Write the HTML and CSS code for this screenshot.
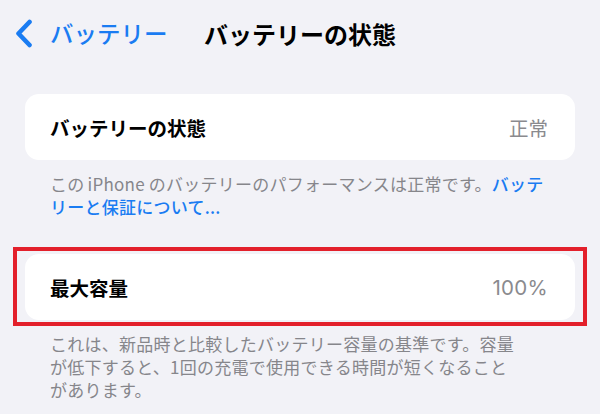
FILE: index.html
```html
<!DOCTYPE html>
<html lang="ja">
<head>
<meta charset="utf-8">
<link rel="stylesheet" href="styles.css">
</head>
<body>
<div class="screen">
  <header class="nav">
    <div class="back">
      <svg class="chev" width="19" height="29" viewBox="0 0 19 29"><path d="M15.5 3 L4.5 14.5 L15.5 26" fill="none" stroke="#1a7cf2" stroke-width="4.6" stroke-linecap="round" stroke-linejoin="round"/></svg>
      <span class="back-text">バッテリー</span>
    </div>
    <h1 class="title">バッテリーの状態</h1>
    <div></div>
  </header>

  <section class="group first">
    <div class="card">
      <span class="label">バッテリーの状態</span>
      <span class="value">正常</span>
    </div>
    <p class="footer">この<span class="latin">iPhone</span>のバッテリーのパフォーマンスは正常です。<span class="link">バッテ<br>リーと保証について...</span></p>
  </section>

  <section class="group second">
    <div class="card-wrap">
      <div class="card">
        <span class="label">最大容量</span>
        <span class="value num">100%</span>
      </div>
      <div class="highlight"></div>
    </div>
    <p class="footer">これは、新品時と比較したバッテリー容量の基準です。容量<br>が低下すると、1回の充電で使用できる時間が短くなること<br>があります。</p>
  </section>
</div>
</body>
</html>
```

FILE: styles.css
```css
html, body {
  margin: 0;
  padding: 0;
}
body {
  background: #f2f2f7;
  font-family: "Noto Sans CJK JP", "Noto Sans", sans-serif;
  width: 600px;
  height: 414px;
  overflow: hidden;
}
.screen {
  display: flex;
  flex-direction: column;
}
.nav {
  height: 66px;
  display: grid;
  grid-template-columns: 1fr auto 1fr;
  align-items: center;
}
.back {
  display: flex;
  align-items: center;
  padding-left: 14px;
  gap: 17px;
  color: #1a7cf2;
}
.back-text {
  font-size: 23.5px;
  font-weight: 500;
}
.title {
  margin: 0;
  font-size: 24px;
  font-weight: 700;
  color: #000;
}
.group.first {
  margin-top: 28px;
}
.group.second {
  margin-top: 36px;
}
.card-wrap {
  position: relative;
}
.card {
  margin: 0 25px;
  height: 66px;
  background: #fff;
  border-radius: 14px;
  display: flex;
  align-items: center;
  justify-content: space-between;
  padding: 0 27px 0 25px;
}
.label {
  font-size: 19.5px;
  font-weight: 700;
  color: #000;
}
.value {
  font-size: 19.5px;
  color: #8a8a8e;
}
.value.num {
  font-family: "Inter", "Noto Sans", sans-serif;
  font-size: 20.5px;
  letter-spacing: 0.3px;
}
.footer {
  margin: 12px 0 0;
  padding: 0 40px 0 50px;
  font-size: 17px;
  letter-spacing: 0.25px;
  line-height: 23px;
  color: #86868b;
}
.latin {
  margin: 0 4px 0 3px;
}
.link {
  color: #1a7cf2;
  font-weight: 500;
}
.highlight {
  position: absolute;
  left: 13px;
  right: 13px;
  top: -7px;
  bottom: -6px;
  border: 4px solid #e3202b;
  pointer-events: none;
}
```
